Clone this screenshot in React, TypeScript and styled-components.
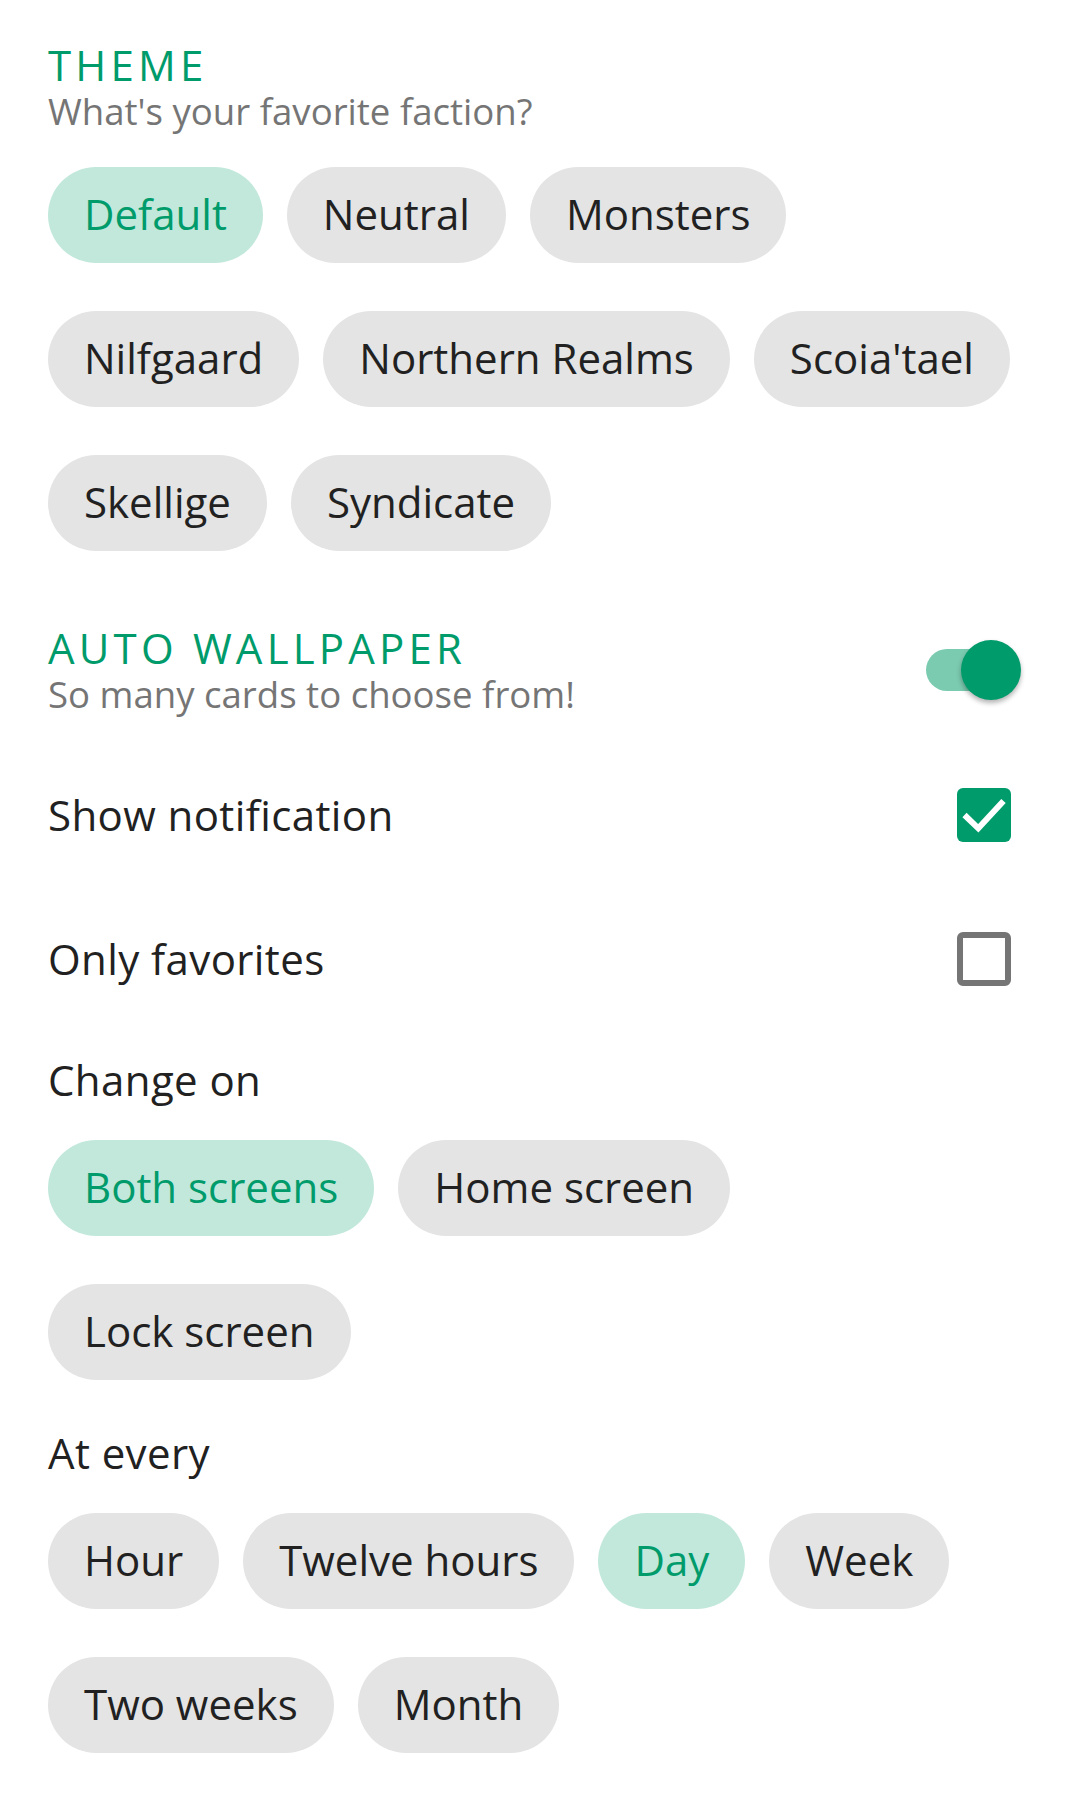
import React, { useState } from "react";
import styled, { createGlobalStyle } from "styled-components";

const GlobalStyle = createGlobalStyle`
  body {
    margin: 0;
    background: #ffffff;
    font-family: "Open Sans", "Noto Sans", sans-serif;
    color: #212121;
  }
`;

const accent = "#009b6b";

const Page = styled.div`
  width: 1080px;
  min-height: 1808px;
  box-sizing: border-box;
  padding: 41px 48px 0;
  display: flex;
  flex-direction: column;
`;

const SectionTitle = styled.div`
  color: ${accent};
  font-size: 42px;
  line-height: 48px;
  letter-spacing: 4.2px;
  text-transform: uppercase;
`;

const SectionSubtitle = styled.div`
  color: #757575;
  font-size: 36.6px;
  line-height: 44px;
`;

const ChipGroup = styled.div<{ $top: number }>`
  display: flex;
  flex-wrap: wrap;
  gap: 48px 24px;
  margin-top: ${({ $top }) => $top}px;
`;

const Chip = styled.button<{ $selected?: boolean }>`
  height: 96px;
  padding: 0 36px 3px;
  border: none;
  border-radius: 48px;
  display: inline-flex;
  align-items: center;
  font-family: inherit;
  font-size: 42px;
  background: ${({ $selected }) => ($selected ? "#c2e8dc" : "#e4e4e4")};
  color: ${({ $selected }) => ($selected ? accent : "#212121")};
  cursor: pointer;
`;

const Header = styled.div`
  display: flex;
  align-items: center;
  justify-content: space-between;
  margin-top: 73px;
`;

const SwitchBox = styled.div`
  position: relative;
  width: 95px;
  height: 60px;
  margin-right: 11px;
  cursor: pointer;
`;

const Track = styled.div<{ $on: boolean }>`
  position: absolute;
  left: 0;
  top: 9px;
  width: 88px;
  height: 42px;
  border-radius: 21px;
  background: ${({ $on }) => ($on ? "#7bcbb1" : "#bdbdbd")};
`;

const Thumb = styled.div<{ $on: boolean }>`
  position: absolute;
  top: 0;
  left: ${({ $on }) => ($on ? 35 : 0)}px;
  width: 60px;
  height: 60px;
  border-radius: 50%;
  background: ${({ $on }) => ($on ? accent : "#fafafa")};
  box-shadow: 0 3px 5px rgba(0, 0, 0, 0.3);
`;

const OptionList = styled.div`
  margin-top: 27px;
  display: flex;
  flex-direction: column;
`;

const OptionRow = styled.label`
  height: 144px;
  display: flex;
  align-items: center;
  justify-content: space-between;
  font-size: 42px;
  line-height: 48px;
  letter-spacing: 0.4px;
  cursor: pointer;
`;

const Box = styled.div<{ $checked: boolean }>`
  width: 54px;
  height: 54px;
  box-sizing: border-box;
  margin-right: 21px;
  border-radius: 6px;
  background: ${({ $checked }) => ($checked ? accent : "transparent")};
  border: ${({ $checked }) => ($checked ? "none" : "6px solid #757575")};
  display: flex;
`;

const Label = styled.div<{ $top: number }>`
  font-size: 42px;
  line-height: 48px;
  letter-spacing: 0.4px;
  margin-top: ${({ $top }) => $top}px;
`;

const Check = () => (
  <svg width="54" height="54" viewBox="0 0 54 54">
    <path d="M7.5 27 L21.3 40.3 L46.5 13" fill="none" stroke="#fff" strokeWidth="6" />
  </svg>
);

const factions = ["Default", "Neutral", "Monsters", "Nilfgaard", "Northern Realms", "Scoia'tael", "Skellige", "Syndicate"];
const screens = ["Both screens", "Home screen", "Lock screen"];
const periods = ["Hour", "Twelve hours", "Day", "Week", "Two weeks", "Month"];

const App: React.FC = () => {
  const [faction, setFaction] = useState("Default");
  const [auto, setAuto] = useState(true);
  const [notify, setNotify] = useState(true);
  const [favorites, setFavorites] = useState(false);
  const [screen, setScreen] = useState("Both screens");
  const [period, setPeriod] = useState("Day");

  return (
    <>
      <GlobalStyle />
      <Page>
        <SectionTitle>Theme</SectionTitle>
        <SectionSubtitle>What's your favorite faction?</SectionSubtitle>
        <ChipGroup $top={34}>
          {factions.map((f) => (
            <Chip key={f} $selected={f === faction} onClick={() => setFaction(f)}>
              {f}
            </Chip>
          ))}
        </ChipGroup>

        <Header>
          <div>
            <SectionTitle>Auto wallpaper</SectionTitle>
            <SectionSubtitle>So many cards to choose from!</SectionSubtitle>
          </div>
          <SwitchBox onClick={() => setAuto(!auto)}>
            <Track $on={auto} />
            <Thumb $on={auto} />
          </SwitchBox>
        </Header>

        <OptionList>
          <OptionRow onClick={() => setNotify(!notify)}>
            Show notification
            <Box $checked={notify}>{notify && <Check />}</Box>
          </OptionRow>
          <OptionRow onClick={() => setFavorites(!favorites)}>
            Only favorites
            <Box $checked={favorites}>{favorites && <Check />}</Box>
          </OptionRow>
        </OptionList>

        <Label $top={25}>Change on</Label>
        <ChipGroup $top={36}>
          {screens.map((s) => (
            <Chip key={s} $selected={s === screen} onClick={() => setScreen(s)}>
              {s}
            </Chip>
          ))}
        </ChipGroup>

        <Label $top={49}>At every</Label>
        <ChipGroup $top={36}>
          {periods.map((p) => (
            <Chip key={p} $selected={p === period} onClick={() => setPeriod(p)}>
              {p}
            </Chip>
          ))}
        </ChipGroup>
      </Page>
    </>
  );
};

export default App;
